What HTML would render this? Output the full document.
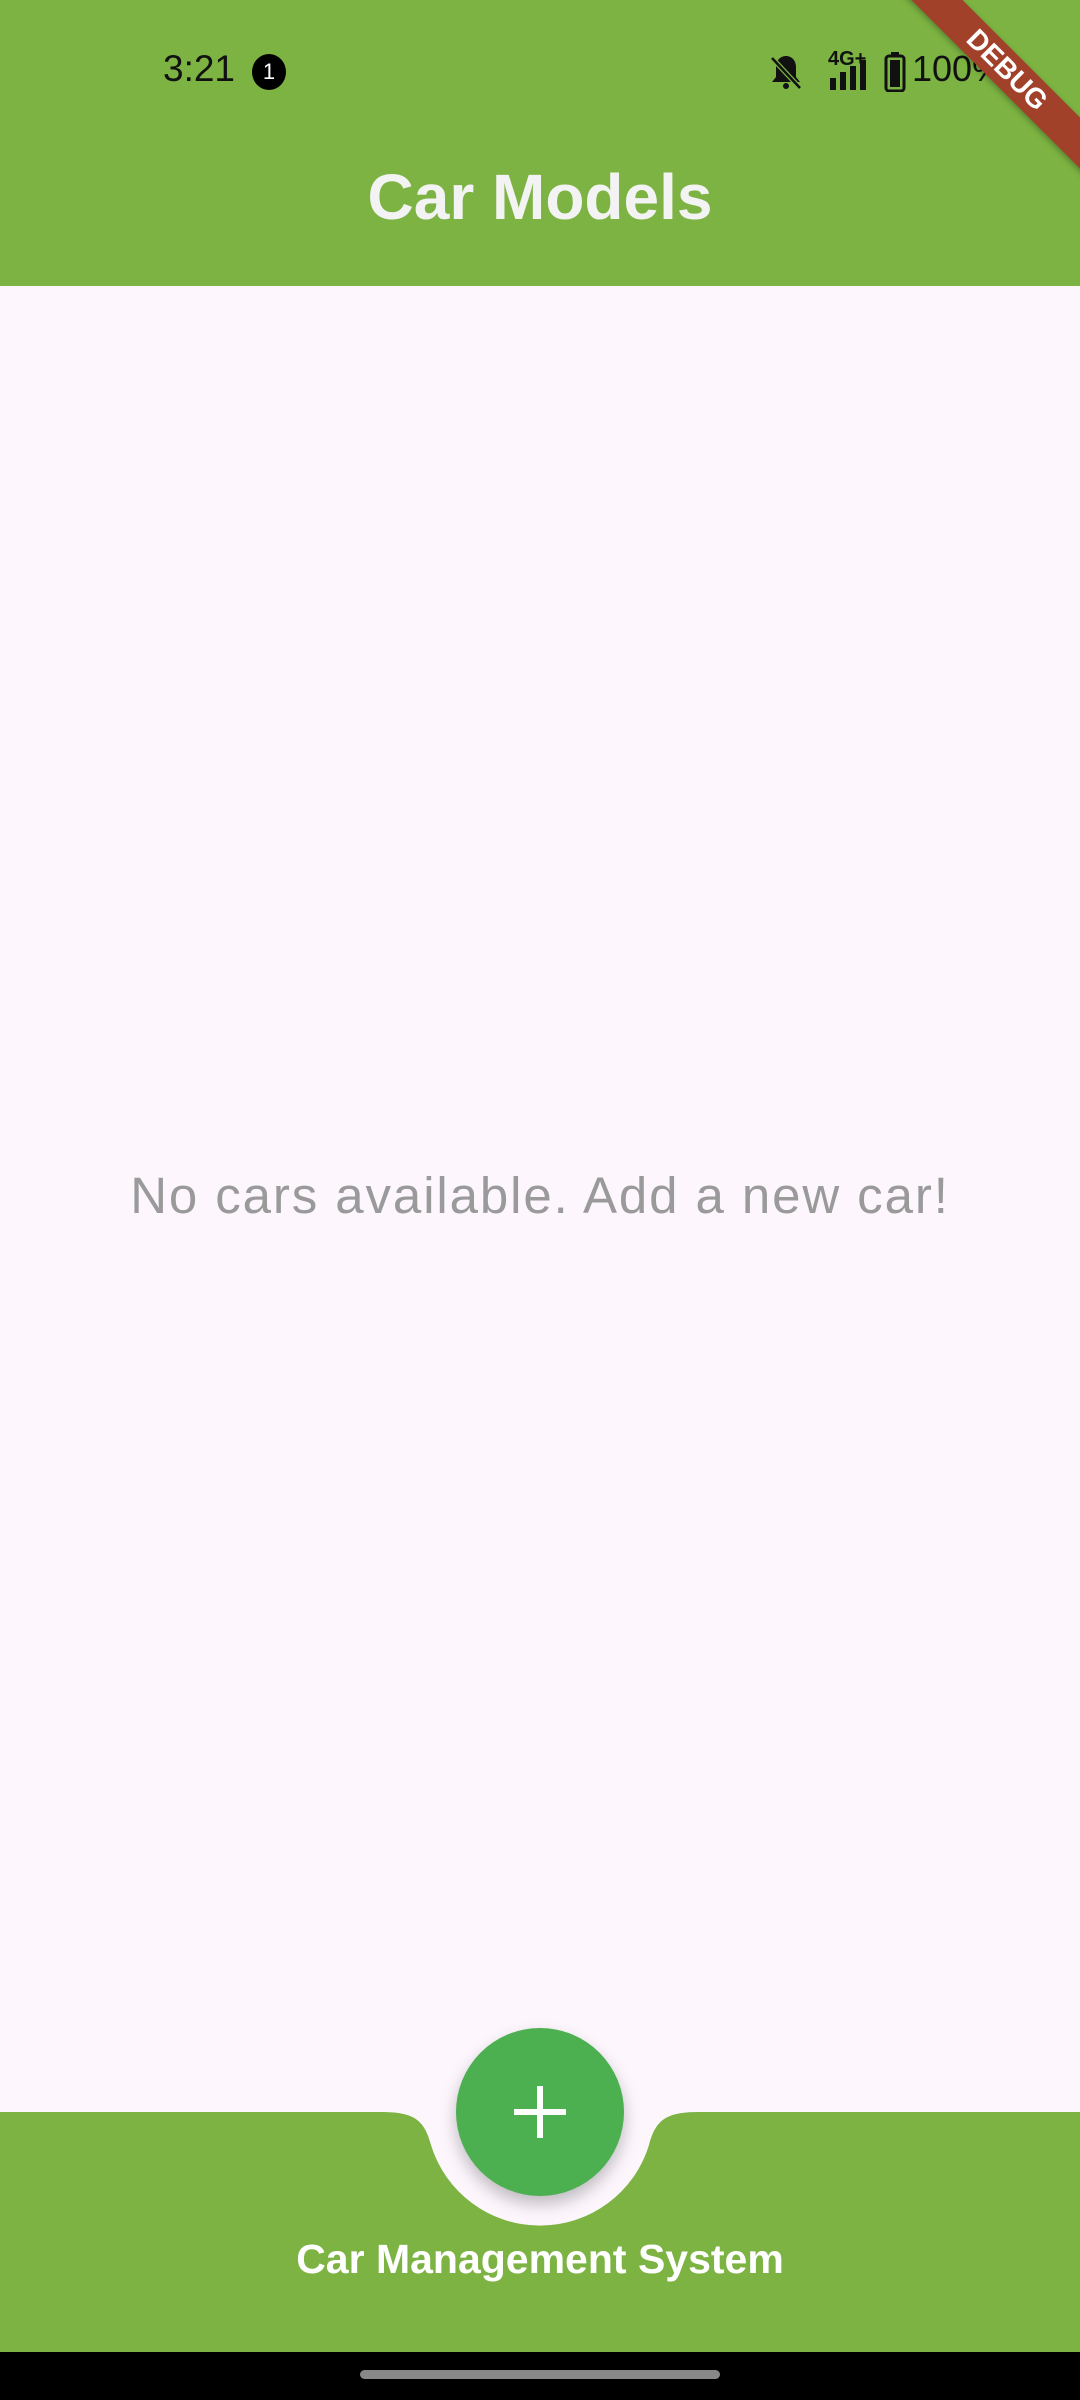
<!DOCTYPE html>
<html><head><meta charset="utf-8"><style>
html,body{margin:0;padding:0}
body{width:1080px;height:2400px;position:relative;overflow:hidden;background:#fdf7fd;font-family:"Liberation Sans",Roboto,sans-serif}
.appbar{position:absolute;left:0;top:0;width:1080px;height:286px;background:#7cb342}
.time{position:absolute;left:163px;top:48px;font-size:37px;color:#111}
.badge{position:absolute;left:252px;top:54px;width:34px;height:36px;border-radius:50%;background:#000;color:#fff;font-size:22px;text-align:center;line-height:36px}
.title{position:absolute;left:0;width:1080px;top:160px;text-align:center;color:#f3f3f3;font-size:64px;font-weight:bold}
.empty{position:absolute;left:0;width:1080px;top:1166px;text-align:center;color:#9a9a9a;font-size:51px;letter-spacing:1.9px}
.bottomtxt{position:absolute;left:0;width:1080px;top:2236px;text-align:center;color:#fff;font-size:41px;font-weight:bold}
.nav{position:absolute;left:0;top:2352px;width:1080px;height:48px;background:#000}
.handle{position:absolute;left:360px;top:2370px;width:360px;height:9px;border-radius:5px;background:#888}
.fab{position:absolute;left:456px;top:2028px;width:168px;height:168px;border-radius:50%;background:#4caf50;box-shadow:0 8px 16px rgba(0,0,0,.25)}
.banner{position:absolute;left:857px;top:52px;width:300px;height:36px;background:#a2412a;transform:rotate(45deg);color:#fff;font-weight:bold;font-size:28px;text-align:center;line-height:36px;box-shadow:0 2px 6px rgba(0,0,0,.3)}
.sr{position:absolute;top:48px;font-size:36px;color:#111}
</style></head><body>
<div class="appbar"></div>
<div class="time">3:21</div>
<div class="badge">1</div>
<svg style="position:absolute;left:768px;top:52px" width="36" height="40" viewBox="0 0 36 40"><path d="M18 4c-6 0-10 5-10 11v10l-4 5h28l-4-5V15c0-6-4-11-10-11z" fill="#111"/><circle cx="18" cy="34" r="3" fill="#111"/><path d="M4 6l28 30" stroke="#7cb342" stroke-width="5"/><path d="M4 6l28 30" stroke="#111" stroke-width="2.5"/></svg>
<div class="sr" style="left:828px;top:48px;font-size:20px;font-weight:bold">4G+</div>
<svg style="position:absolute;left:830px;top:60px" width="44" height="30" viewBox="0 0 44 30"><rect x="0" y="18" width="6" height="12" fill="#111"/><rect x="10" y="12" width="6" height="18" fill="#111"/><rect x="20" y="6" width="6" height="24" fill="#111"/><rect x="30" y="0" width="6" height="30" fill="#111"/></svg>
<svg style="position:absolute;left:884px;top:52px" width="22" height="40" viewBox="0 0 22 40"><rect x="7" y="0" width="8" height="4" fill="#111"/><rect x="2" y="4" width="18" height="35" rx="3" fill="none" stroke="#111" stroke-width="3"/><rect x="6" y="8" width="10" height="27" fill="#111"/></svg>
<div class="sr" style="left:912px">100%</div>
<div class="banner">DEBUG</div>
<div class="title">Car Models</div>
<div class="empty">No cars available. Add a new car!</div>
<svg style="position:absolute;left:0;top:0" width="1080" height="2400"><path d="M0 2112H380C412 2112 424 2118 431 2145A114 114 0 0 0 649 2145C656 2118 668 2112 700 2112H1080V2352H0Z" fill="#7cb342"/></svg>
<div class="fab"><svg width="168" height="168" viewBox="0 0 168 168"><path d="M84 58V110M58 84H110" stroke="#fff" stroke-width="6"/></svg></div>
<div class="bottomtxt">Car Management System</div>
<div class="nav"></div>
<div class="handle"></div>
</body></html>
